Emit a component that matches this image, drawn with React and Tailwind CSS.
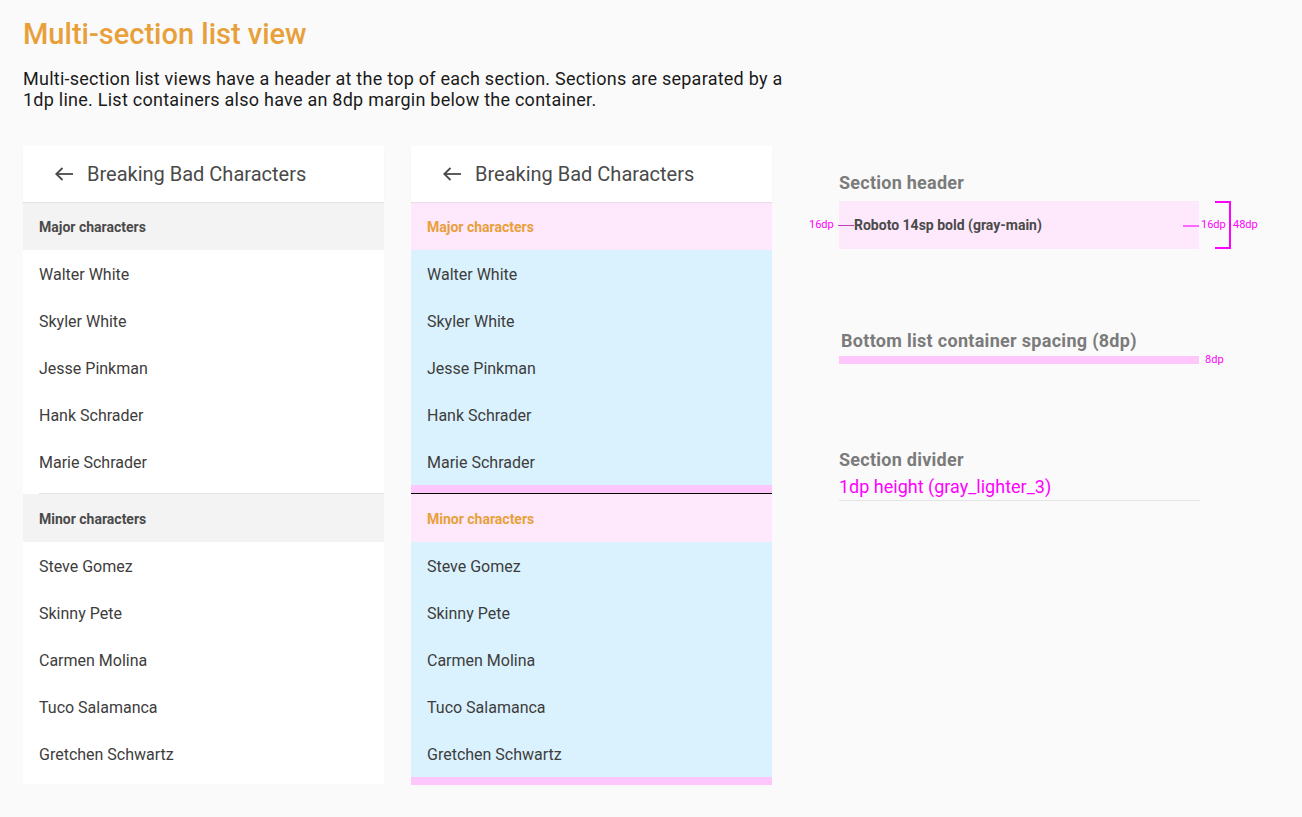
import React from 'react';

const major = ['Walter White', 'Skyler White', 'Jesse Pinkman', 'Hank Schrader', 'Marie Schrader'];
const minor = ['Steve Gomez', 'Skinny Pete', 'Carmen Molina', 'Tuco Salamanca', 'Gretchen Schwartz'];

function BackArrow() {
  return (
    <svg width="18" height="14" viewBox="0 0 18 14" fill="none" stroke="#4a4a4a" strokeWidth="1.8">
      <path d="M18 7H1.5" />
      <path d="M7.5 1L1.3 7l6.2 6" />
    </svg>
  );
}

function Toolbar() {
  return (
    <div className="h-[56px] bg-white flex items-center pl-[32px] shadow-[0_1px_1px_rgba(0,0,0,0.06)] relative z-10">
      <BackArrow />
      <span className="ml-[14px] text-[20px] text-[#4a4a4a]">Breaking Bad Characters</span>
    </div>
  );
}

function Section({ title, items, annotated, first }) {
  return (
    <div>
      {!first && !annotated && (
        <div className="bg-white pl-[16px]">
          <div className="h-px bg-[#e4e4e4]" />
        </div>
      )}
      {!first && annotated && <div className="h-px bg-black" />}
      <div
        className={
          'h-[48px] flex items-center px-[16px] pt-[2px] text-[14px] font-bold ' +
          (annotated ? 'bg-[#fee8fc] text-[#e8a03b]' : 'bg-[#f3f3f3] text-[#4a4a4a]')
        }
      >
        {title}
      </div>
      {items.map((name) => (
        <div
          key={name}
          className={
            'h-[47px] flex items-center px-[16px] pt-[2px] text-[16px] text-[#3d3d3d] ' +
            (annotated ? 'bg-[#daf2fd]' : 'bg-white')
          }
        >
          {name}
        </div>
      ))}
      {annotated ? (
        <div className="h-[8px] bg-[#fdc7fb]" />
      ) : (
        <div className={first ? 'h-[8px] bg-white' : 'h-[7px] bg-white'} />
      )}
    </div>
  );
}

function Phone({ annotated }) {
  return (
    <div className="w-[361px] bg-white">
      <Toolbar />
      <Section title="Major characters" items={major} annotated={annotated} first />
      <Section title="Minor characters" items={minor} annotated={annotated} />
    </div>
  );
}

function Annotations() {
  return (
    <div className="w-[430px] pt-[27px]">
      <div className="text-[18px] leading-[20px] tracking-[0.25px] font-bold text-[#7b7b7b]">Section header</div>
      <div className="mt-[8px] w-[360px] h-[48px] bg-[#fee8fc] relative flex items-center pl-[15px] text-[14px] font-bold text-[#4a4a4a]">
        <span className="absolute left-[-30px] top-1/2 -translate-y-1/2 text-[11px] font-normal text-[#f0f]">16dp</span>
        <div className="absolute left-[-1px] top-1/2 w-[16px] h-px bg-[#c03fc0]" />
        Roboto 14sp bold (gray-main)
        <div className="absolute right-0 top-1/2 w-[16px] h-[2px] bg-[#ff66ff]" />
        <span className="absolute left-[362px] top-1/2 -translate-y-1/2 text-[11px] font-normal text-[#f0f]">16dp</span>
        <div className="absolute left-[376px] top-0 w-[16px] h-[48px] border-t-2 border-r-2 border-b-2 border-[#f0f]" />
        <span className="absolute left-[394px] top-1/2 -translate-y-1/2 text-[11px] font-normal text-[#f0f]">48dp</span>
      </div>

      <div className="mt-[82px] pl-[2px] text-[18px] leading-[20px] tracking-[0.3px] font-bold text-[#7b7b7b]">
        Bottom list container spacing (8dp)
      </div>
      <div className="mt-[5px] flex items-center">
        <div className="w-[360px] h-[8px] bg-[#fdc7fb]" />
        <span className="ml-[6px] text-[11px] leading-[8px] text-[#f0f]">8dp</span>
      </div>

      <div className="mt-[86px] text-[18px] leading-[20px] tracking-[0.25px] font-bold text-[#7b7b7b]">Section divider</div>
      <div className="mt-[6px] text-[18px] leading-[22px] text-[#f0f]">1dp height (gray_lighter_3)</div>
      <div className="mt-[2px] w-[361px] h-px bg-[#e4e4e4]" />
    </div>
  );
}

export default function App() {
  return (
    <div className="min-h-screen bg-[#fafafa] pl-[23px] pt-[19px] font-['Roboto',sans-serif]">
      <h1 className="text-[29px] leading-[30px] font-medium text-[#e8a03b]">Multi-section list view</h1>
      <p className="mt-[19px] text-[18px] leading-[21px] tracking-[0.25px] text-[#1a1a1a] w-[790px]">
        Multi-section list views have a header at the top of each section. Sections are separated by a
        <br />
        1dp line. List containers also have an 8dp margin below the container.
      </p>
      <div className="mt-[36px] flex items-start">
        <Phone />
        <div className="ml-[27px]">
          <Phone annotated />
        </div>
        <div className="ml-[67px]">
          <Annotations />
        </div>
      </div>
    </div>
  );
}
